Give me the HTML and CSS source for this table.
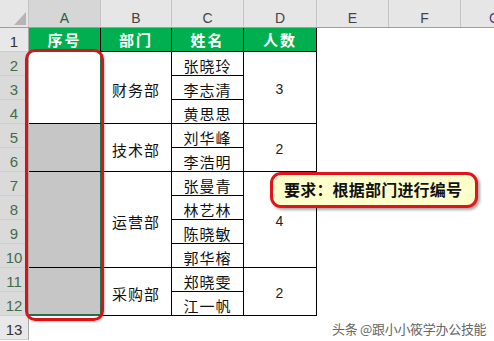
FILE: index.html
```html
<!DOCTYPE html>
<html lang="zh">
<head>
<meta charset="utf-8">
<link rel="stylesheet" href="styles.css">
</head>
<body>
<div class="sheet">
  <div class="colhdr">
    <div class="corner"><svg width="29" height="28" viewBox="0 0 29 28"><polygon points="14,25 26,12 26,25" fill="#b5b5b5"/></svg></div>
    <div class="ch w72 sel">A</div>
    <div class="ch w71">B</div>
    <div class="ch w72">C</div>
    <div class="ch w73">D</div>
    <div class="ch w72">E</div>
    <div class="ch w72">F</div>
    <div class="ch rest"><span class="gcut">G</span></div>
  </div>
  <div class="body">
    <div class="rowhdr">
      <div class="rh">1</div>
      <div class="rh on">2</div>
      <div class="rh on">3</div>
      <div class="rh on">4</div>
      <div class="rh on">5</div>
      <div class="rh on">6</div>
      <div class="rh on">7</div>
      <div class="rh on">8</div>
      <div class="rh on">9</div>
      <div class="rh on">10</div>
      <div class="rh on">11</div>
      <div class="rh on">12</div>
      <div class="rh">13</div>
    </div>
    <div class="col w72 cola">
      <div class="cell hd">序号</div>
      <div class="cell h3 white"></div>
      <div class="cell h2 gray"></div>
      <div class="cell h4 gray"></div>
      <div class="cell h2 gray last"></div>
    </div>
    <div class="col w71">
      <div class="cell hd">部门</div>
      <div class="cell h3 txt">财务部</div>
      <div class="cell h2 txt">技术部</div>
      <div class="cell h4 txt">运营部</div>
      <div class="cell h2 txt">采购部</div>
    </div>
    <div class="col w72">
      <div class="cell hd">姓名</div>
      <div class="cell h1 txt">张晓玲</div>
      <div class="cell h1 txt">李志清</div>
      <div class="cell h1 txt">黄思思</div>
      <div class="cell h1 txt">刘华峰</div>
      <div class="cell h1 txt">李浩明</div>
      <div class="cell h1 txt">张曼青</div>
      <div class="cell h1 txt">林艺林</div>
      <div class="cell h1 txt">陈晓敏</div>
      <div class="cell h1 txt">郭华榕</div>
      <div class="cell h1 txt">郑晓雯</div>
      <div class="cell h1 txt">江一帆</div>
    </div>
    <div class="col w73">
      <div class="cell hd">人数</div>
      <div class="cell h3 num">3</div>
      <div class="cell h2 num">2</div>
      <div class="cell h4 num">4</div>
      <div class="cell h2 num">2</div>
    </div>
  </div>
  <div class="redbox"></div>
  <div class="callout">要求：根据部门进行编号</div>
  <div class="watermark">头条 @跟小小筱学办公技能</div>
</div>
</body>
</html>
```
FILE: styles.css
```css
* { box-sizing: border-box; }
html, body { margin: 0; padding: 0; background: #fff; }
body { width: 494px; height: 341px; overflow: hidden; }

.sheet {
  position: relative;
  width: 494px;
  height: 341px;
  font-family: "Noto Sans CJK SC", sans-serif;
}

.colhdr {
  display: flex;
  height: 28px;
  background: #e6e6e6;
  border-bottom: 1px solid #9e9e9e;
}
.corner {
  width: 29px;
  flex: none;
  border-right: 1px solid #c4c4c4;
}
.corner svg { display: block; }
.ch {
  flex: none;
  display: flex;
  align-items: flex-end;
  justify-content: center;
  padding-bottom: 1px;
  font-family: "Liberation Sans", sans-serif;
  font-size: 14px;
  line-height: 16px;
  color: #444;
  border-right: 1px solid #c4c4c4;
  background: linear-gradient(#e6e6e6, #e6e6e6) no-repeat;
}
.ch.sel { background: #d6d6d6; color: #2a5d3a; }
.ch.rest { flex: 1; border-right: none; justify-content: flex-end; overflow: hidden; }
.gcut { margin-right: -6px; color: #5a3a7a; }

.w72 { width: 72px; flex: none; }
.w71 { width: 71px; flex: none; }
.w73 { width: 73px; flex: none; }

.body { display: flex; }

.rowhdr {
  width: 29px;
  flex: none;
  display: flex;
  flex-direction: column;
}
.rh {
  height: 24px;
  background: #e8e8e8;
  border-bottom: 1px solid #cfcfcf;
  border-right: 1px solid #a8a8a8;
  display: flex;
  align-items: flex-end;
  justify-content: center;
  font-family: "Liberation Sans", sans-serif;
  font-size: 15px;
  line-height: 18px;
  color: #333;
}
.rh.on { background: #dadada; color: #3f6e4c; }

.col { display: flex; flex-direction: column; }

.cell {
  border-right: 1px solid #000;
  border-bottom: 1px solid #000;
  display: flex;
  align-items: center;
  justify-content: center;
  font-size: 15px;
  letter-spacing: 1px;
  color: #111;
}
.hd {
  height: 24px;
  background: #00b050;
  color: #fff;
  font-weight: bold;
  letter-spacing: 2px;
}
.h1 { height: 24px; padding-top: 3px; }
.h2 { height: 48px; }
.h3 { height: 72px; }
.h4 { height: 96px; }
.txt { padding-top: 3px; }
.num {
  font-family: "Liberation Sans", sans-serif;
  font-size: 14px;
  color: #222;
  padding-top: 3px;
}
.cola .cell { border-right: 1px solid #217346; }
.cola .hd { border-right: 1px solid #000; }
.white { background: #fff; }
.gray { background: #c6c6c6; }
.cola .last { border-bottom: 2px solid #217346; }

.redbox {
  position: absolute;
  left: 25px;
  top: 49px;
  width: 79px;
  height: 272px;
  border: 3px solid #d8141b;
  border-radius: 10px;
  box-shadow: 1px 1px 2px rgba(0,0,0,0.25);
}

.callout {
  position: absolute;
  left: 270px;
  top: 172px;
  width: 208px;
  height: 36px;
  background: #ffffcc;
  border: 3px solid #e0141b;
  border-radius: 11px;
  box-shadow: 2px 2px 3px rgba(0,0,0,0.35);
  display: flex;
  align-items: center;
  padding-left: 11px;
  padding-bottom: 3px;
  font-size: 16px;
  font-weight: bold;
  color: #111;
  letter-spacing: 0.2px;
}

.watermark {
  position: absolute;
  left: 332px;
  top: 319px;
  font-size: 13px;
  color: #666;
  letter-spacing: -0.3px;
  text-shadow: 0 0 2px #fff, 0 0 2px #fff;
}
```
